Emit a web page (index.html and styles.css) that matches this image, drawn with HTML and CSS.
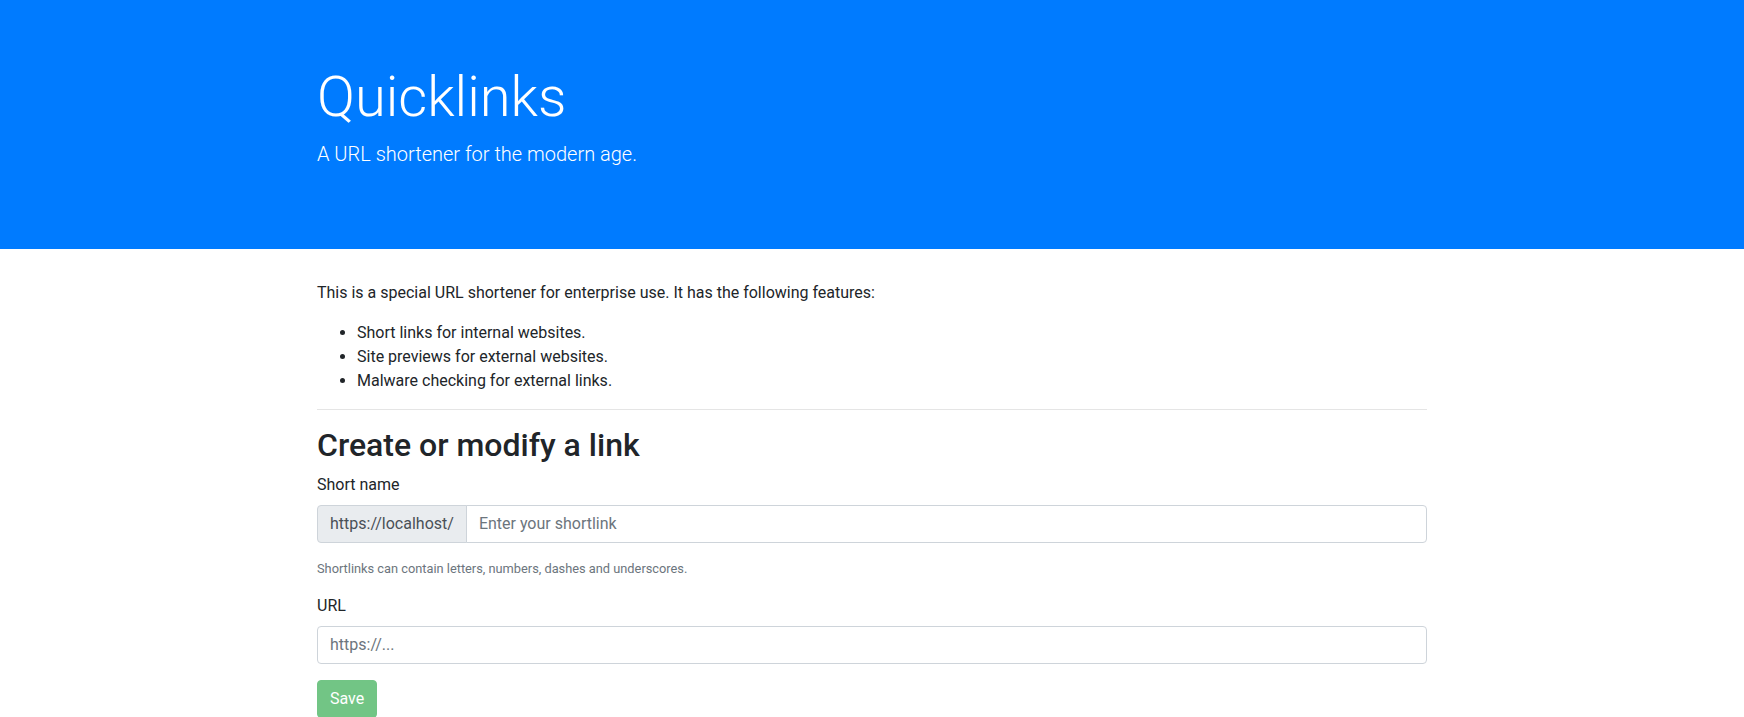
FILE: index.html
```html
<!DOCTYPE html>
<html lang="en">
<head>
<meta charset="utf-8">
<title>Quicklinks</title>
<link rel="stylesheet" href="styles.css">
</head>
<body>
<header class="jumbotron">
  <div class="container">
    <h1 class="display">Quicklinks</h1>
    <p class="lead">A URL shortener for the modern age.</p>
  </div>
</header>
<main class="container">
  <p>This is a special URL shortener for enterprise use. It has the following features:</p>
  <ul>
    <li>Short links for internal websites.</li>
    <li>Site previews for external websites.</li>
    <li>Malware checking for external links.</li>
  </ul>
  <hr>
  <h2>Create or modify a link</h2>
  <form>
    <div class="form-group">
      <label for="short">Short name</label>
      <div class="input-group">
        <span class="prefix">https://localhost/</span>
        <input id="short" class="control grouped" type="text" placeholder="Enter your shortlink">
      </div>
      <small class="help">Shortlinks can contain letters, numbers, dashes and underscores.</small>
    </div>
    <div class="form-group">
      <label for="url">URL</label>
      <input id="url" class="control" type="text" placeholder="https://...">
    </div>
    <button class="btn" type="submit" disabled>Save</button>
  </form>
</main>
</body>
</html>
```

FILE: styles.css
```css
* { box-sizing: border-box; }
html, body { margin: 0; padding: 0; }
body {
  font-family: Roboto, "Liberation Sans", sans-serif;
  font-size: 16px;
  line-height: 1.5;
  color: #212529;
  background: #fff;
}
.container {
  width: 1140px;
  margin: 0 auto;
  padding: 0 15px;
}
.jumbotron {
  background: #007bff;
  color: #fff;
  padding: 64px 0;
  margin-bottom: 32px;
}
.display {
  font-size: 56px;
  font-weight: 300;
  line-height: 1.2;
  margin: 0 0 8px;
}
.lead {
  font-size: 20px;
  font-weight: 300;
  line-height: 1.5;
  margin: 0 0 16px;
}
p { margin: 0 0 16px; }
ul { margin: 0 0 16px; padding-left: 40px; }
hr {
  margin: 16px 0;
  border: 0;
  border-top: 1px solid rgba(0,0,0,.1);
  height: 0;
}
h2 {
  font-size: 32px;
  font-weight: 500;
  line-height: 1.2;
  margin: 0 0 8px;
}
.form-group { margin-bottom: 16px; }
label {
  display: inline-block;
  margin-bottom: 8px;
}
.input-group {
  display: flex;
  margin-bottom: 16px;
}
.prefix {
  display: flex;
  align-items: center;
  padding: 6px 12px;
  background: #e9ecef;
  border: 1px solid #ced4da;
  border-radius: 4px 0 0 4px;
  color: #495057;
  white-space: nowrap;
  height: 38px;
}
.control {
  display: block;
  width: 100%;
  height: 38px;
  padding: 6px 12px;
  font-family: inherit;
  font-size: 16px;
  line-height: 1.5;
  color: #495057;
  background: #fff;
  border: 1px solid #ced4da;
  border-radius: 4px;
  outline: none;
}
.control.grouped {
  flex: 1;
  width: auto;
  margin-left: -1px;
  border-radius: 0 4px 4px 0;
}
.control::placeholder { color: #6c757d; opacity: 1; }
.help {
  display: block;
  font-size: 12.8px;
  line-height: 19.2px;
  color: #6c757d;
}
.btn {
  font-family: inherit;
  font-size: 16px;
  line-height: 1.5;
  padding: 6px 12px;
  color: #fff;
  background: #28a745;
  border: 1px solid #28a745;
  border-radius: 4px;
  opacity: .65;
}
```
